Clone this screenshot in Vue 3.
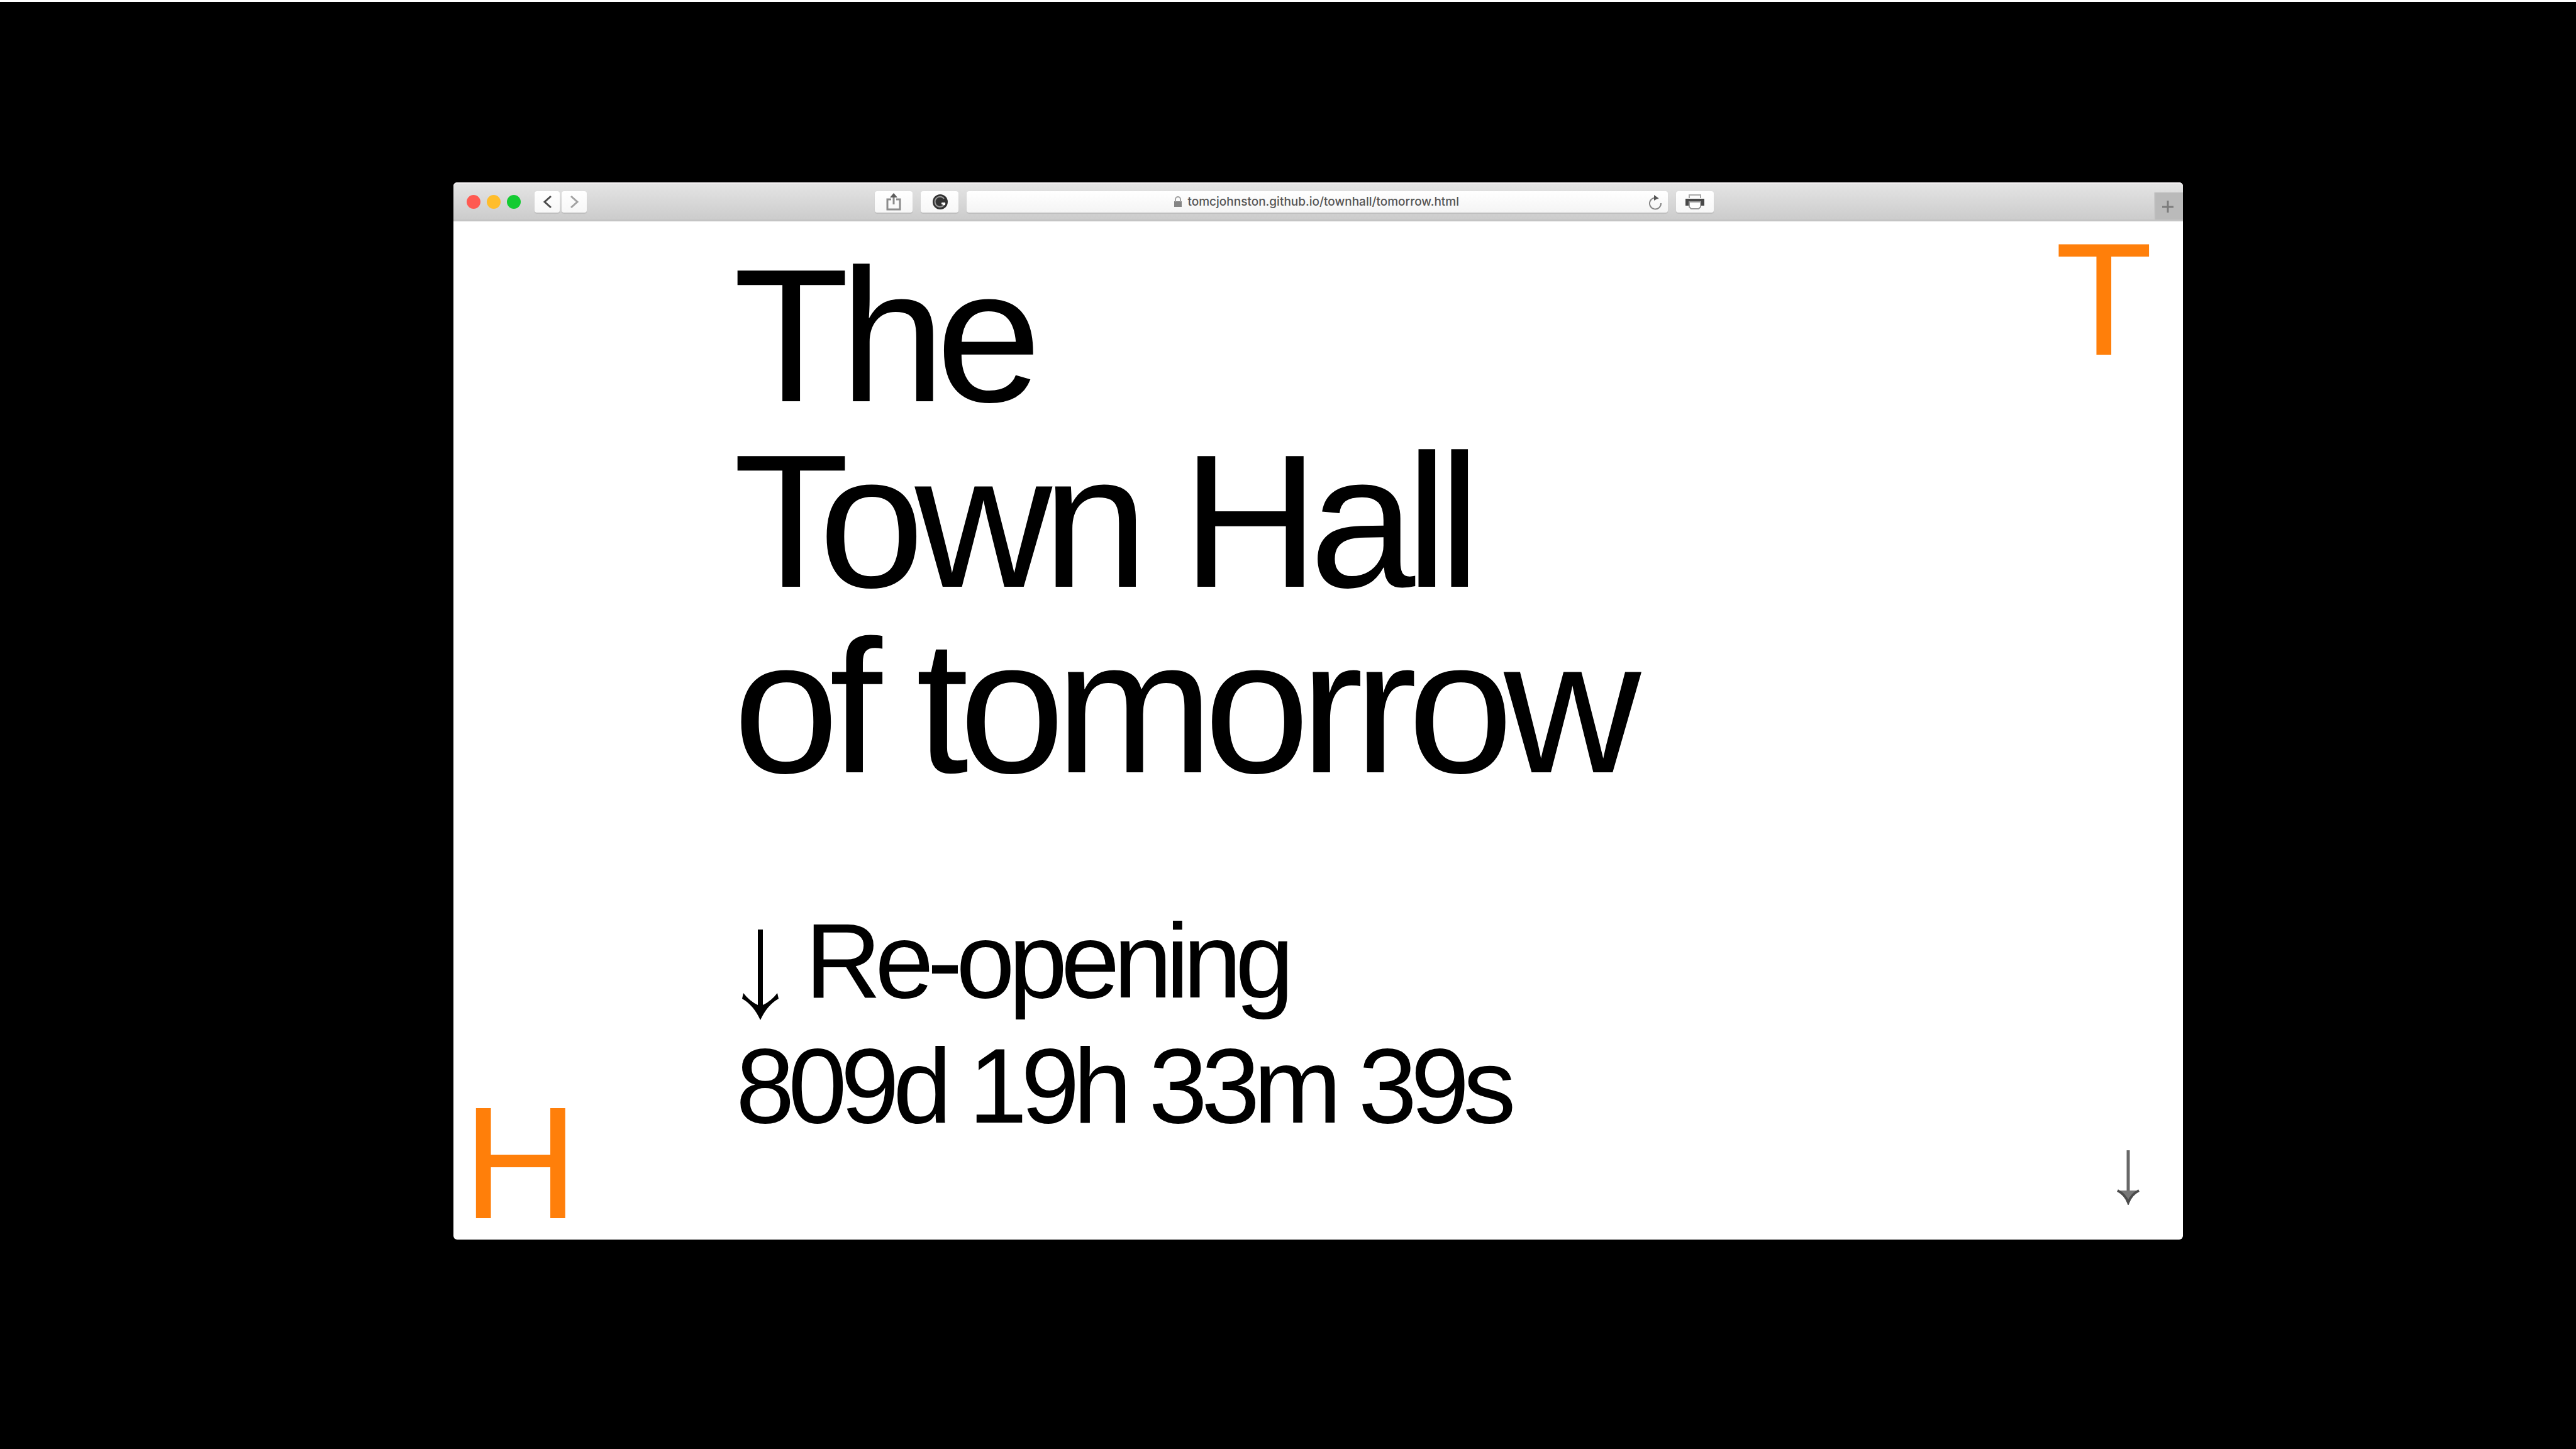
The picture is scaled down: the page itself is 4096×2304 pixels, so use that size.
<script setup>
const title = ['The', 'Town Hall', 'of tomorrow']
const address = 'tomcjohnston.github.io/townhall/tomorrow.html'
const countdown = { days: 809, hours: 19, minutes: 33, seconds: 39 }
</script>

<template>
  <div class="desktop">
    <section class="window" aria-label="Browser window">
      <header class="toolbar">
        <div class="lights">
          <button class="light close" aria-label="Close"></button>
          <button class="light minimise" aria-label="Minimise"></button>
          <button class="light expand" aria-label="Expand"></button>
        </div>
        <nav class="history">
          <button class="tool nav" aria-label="Back">
            <svg width="40" height="34" viewBox="0 0 40 34"><path d="M26 8 L16 17 L26 26" fill="none" stroke="#4a4a4a" stroke-width="3" /></svg>
          </button>
          <button class="tool nav" aria-label="Forward">
            <svg width="40" height="34" viewBox="0 0 40 34"><path d="M15 8 L25 17 L15 26" fill="none" stroke="#a2a2a2" stroke-width="3" /></svg>
          </button>
        </nav>
        <div class="centre">
          <button class="tool" aria-label="Share">
            <svg width="60" height="34" viewBox="0 0 60 34">
              <path d="M26 13 H20 V29 H40 V13 H34" fill="none" stroke="#8c8c8c" stroke-width="3" />
              <path d="M30 8 V21" stroke="#8c8c8c" stroke-width="3" />
              <path d="M24 10 L30 3 L36 10 Z" fill="#5c5c5c" />
            </svg>
          </button>
          <button class="tool" aria-label="Grammar extension">
            <svg width="60" height="34" viewBox="0 0 60 34">
              <circle cx="31" cy="17" r="12" fill="#333" />
              <path d="M37 12 A8 8 0 1 0 38 20 H32" fill="none" stroke="#999" stroke-width="2" />
              <path d="M33 18 H39 V22 H35 Z" fill="#fff" />
            </svg>
          </button>
          <div class="address">
            <svg class="lock" width="14" height="18" viewBox="0 0 14 18">
              <rect x="1" y="8" width="12" height="9" fill="#858585" />
              <path d="M3 9 V5 A4 4 0 0 1 11 5 V9" fill="none" stroke="#a0a0a0" stroke-width="2" />
            </svg>
            <a class="url" href="#">{{ address }}</a>
            <button class="reload" aria-label="Reload">
              <svg width="24" height="26" viewBox="0 0 24 26">
                <path d="M17 8 A9 9 0 1 0 21 15" fill="none" stroke="#858585" stroke-width="2" />
                <path d="M10 2 L17 7 L10 11 Z" fill="#555" />
              </svg>
            </button>
          </div>
          <button class="tool" aria-label="Print">
            <svg width="60" height="34" viewBox="0 0 60 34">
              <path d="M21 11 V6 H39 V11" fill="none" stroke="#aaa" stroke-width="2" />
              <path d="M15 12 H45 V23 H40 V17 H20 V23 H15 Z" fill="#484848" />
              <path d="M21 17 H39 V25 L36 28 H24 L21 25 Z" fill="#fff" stroke="#999" stroke-width="2" />
            </svg>
          </button>
        </div>
        <button class="new-tab" aria-label="New tab">
          <svg width="44" height="43" viewBox="0 0 44 43"><path d="M20 13 V32 M11 23 H29" stroke="#7c7c7c" stroke-width="3" /></svg>
        </button>
      </header>

      <main class="page">
        <aside class="left"><span class="initial">H</span></aside>
        <div class="copy">
          <h1><span v-for="line in title" :key="line">{{ line }}</span></h1>
          <div class="opening">
            <p class="label">
              <svg class="arrow" width="58" height="144" viewBox="0 0 58 144" aria-hidden="true">
                <path d="M25 0 H33 V120 Q46 114 56 101 L58 110 Q40 120 29 144 Q18 120 0 110 L2 101 Q12 114 25 120 Z" fill="#000" />
              </svg>
              <span>Re-opening</span>
            </p>
            <p>{{ countdown.days }}d {{ countdown.hours }}h {{ countdown.minutes }}m {{ countdown.seconds }}s</p>
          </div>
        </div>
        <aside class="right">
          <span class="initial">T</span>
          <a class="scroll" href="#" aria-label="Scroll down">
            <svg width="38" height="88" viewBox="0 0 38 88">
              <path d="M19 1 V80" stroke="#686868" stroke-width="5" />
              <path d="M2 65 Q14 71 19 84 Q24 71 36 65" fill="#777" stroke="#4c4c4c" stroke-width="4" />
            </svg>
          </a>
        </aside>
      </main>
    </section>
  </div>
</template>

<style>
body {
  margin: 0;
  background: #000;
}
</style>

<style scoped>
.desktop {
  box-sizing: border-box;
  min-height: 100vh;
  padding: 287px 15.26% 0 17.6%;
  border-top: 3px solid #fff;
  background: #000;
  font-family: "Liberation Sans", Arial, sans-serif;
}
.window {
  border-radius: 6px;
  background: #fff;
}
button {
  padding: 0;
  border: 0;
  font: inherit;
}
svg {
  display: block;
}
.toolbar {
  box-sizing: border-box;
  display: grid;
  grid-template-columns: auto auto 17fr auto 26fr auto;
  align-items: center;
  height: 62px;
  padding-left: 21px;
  border-top: 2px solid #f4f0f2;
  border-bottom: 3px solid #c4c4c4;
  border-radius: 6px 6px 0 0;
  background: linear-gradient(#e4e4e4, #cccccc);
}
.lights {
  display: flex;
  gap: 10px;
}
.light {
  width: 22px;
  height: 22px;
  border-radius: 50%;
}
.close { background: #ff5a52; }
.minimise { background: #ffbd2b; }
.expand { background: #14cb32; }
.history {
  display: flex;
  gap: 3px;
  margin-left: 22px;
}
.tool {
  display: flex;
  align-items: center;
  justify-content: center;
  width: 60px;
  height: 34px;
  border-radius: 4px;
  background: linear-gradient(#fff, #f7f7f7);
  box-shadow: 0 2px 1px #bdbdbd;
}
.nav {
  width: 40px;
}
.centre {
  grid-column: 4;
  display: grid;
  grid-template-columns: 60px 60px 1fr 60px;
  gap: 13px;
  width: 1334px;
}
.address {
  display: flex;
  align-items: center;
  height: 34px;
  padding-left: 30px;
  border-radius: 4px;
  background: linear-gradient(#fff, #f4f4f4);
  box-shadow: 0 2px 1px #bdbdbd;
}
.lock {
  margin-left: auto;
}
.url {
  margin: 0 auto 0 8px;
  color: #555;
  font: 500 19px/34px Inter, "Liberation Sans", sans-serif;
  text-decoration: none;
}
.reload {
  margin-right: 8px;
  background: none;
}
.new-tab {
  grid-column: 6;
  align-self: end;
  border-left: 2px solid #c8c8c8;
  background: #bababa;
}
.page {
  display: grid;
  grid-template-columns: 445px 1fr auto;
  color: #000;
}
.left,
.right {
  display: flex;
  flex-direction: column;
}
.left {
  justify-content: flex-end;
  padding: 0 0 12px 15px;
}
.right {
  justify-content: space-between;
  align-items: flex-end;
  padding: 14px 48px 55px 0;
}
.initial {
  color: #ff7f0a;
  font-size: 254px;
  line-height: 220px;
}
.scroll {
  margin-right: 20px;
}
.copy {
  padding: 34px 0 144px;
}
h1 {
  margin: 0;
  font-size: 302px;
  font-weight: 400;
  line-height: 295px;
  letter-spacing: -0.05em;
}
h1 span {
  display: block;
}
.opening {
  margin-top: 158px;
  padding-left: 4px;
  font-size: 168px;
  line-height: 199px;
  letter-spacing: -0.06em;
}
.opening p {
  margin: 0;
}
.opening .label {
  display: flex;
  gap: 42px;
  padding-left: 10px;
}
.arrow {
  margin-top: 49px;
}
</style>
